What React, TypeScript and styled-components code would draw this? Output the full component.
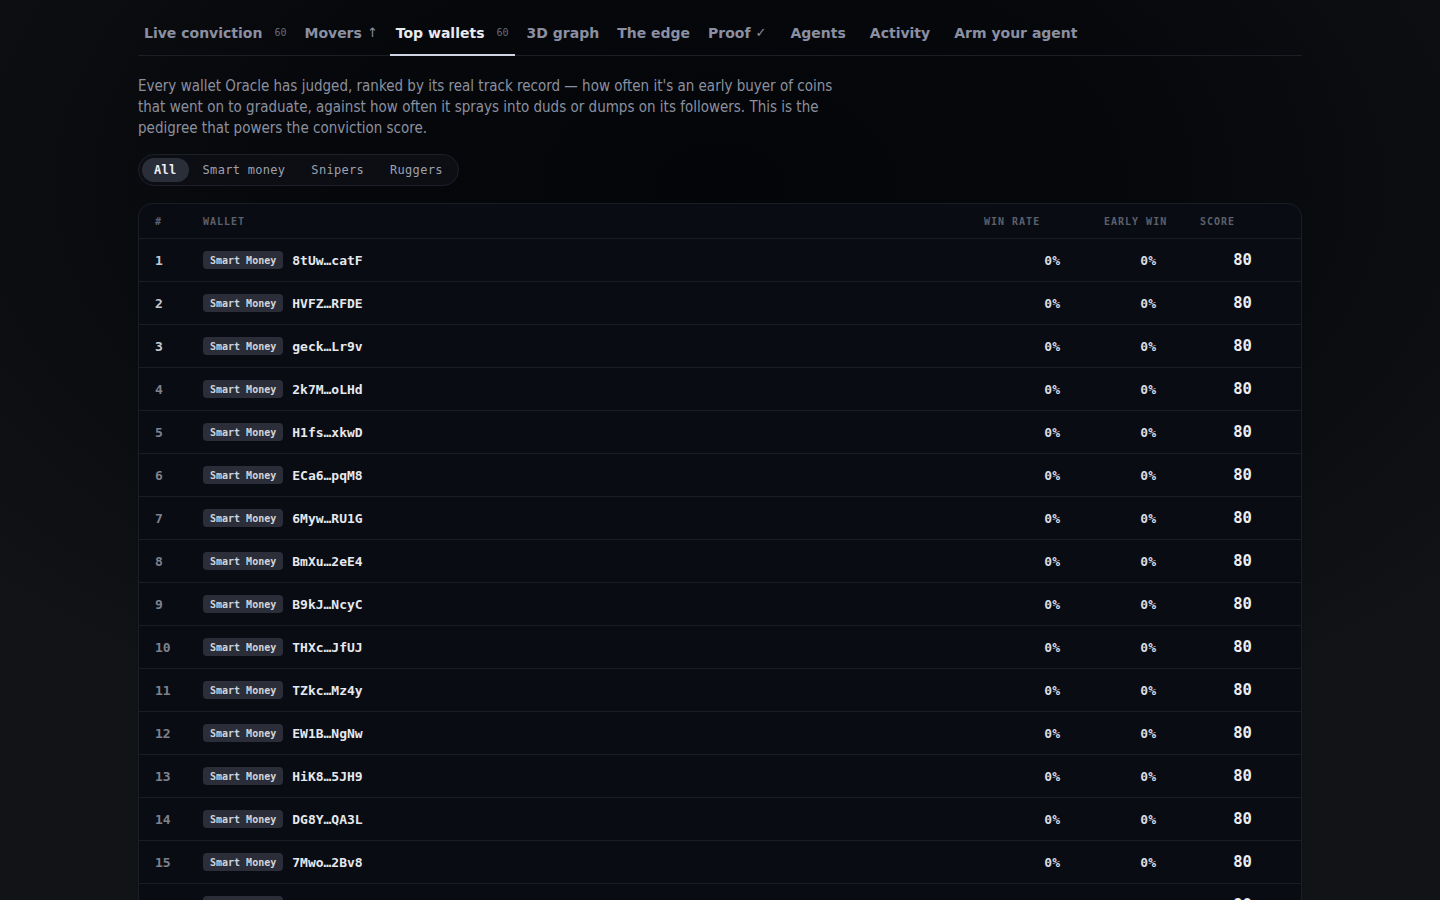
import React from "react";
import styled, { createGlobalStyle } from "styled-components";

const Global = createGlobalStyle`
  html, body { margin: 0; padding: 0; }
  body {
    background: radial-gradient(ellipse 70% 60% at 50% 18%, #040509 0%, #07080c 45%, #121317 100%);
    background-color: #07080c;
    min-height: 100vh;
    font-family: "DejaVu Sans", sans-serif;
    color: #e6e8ee;
  }
`;

const MONO = `"DejaVu Sans Mono", "Liberation Mono", monospace`;

const Page = styled.div`
  width: 1164px;
  margin: 0 auto;
  padding-top: 10px;
`;

const Nav = styled.nav`
  display: flex;
  gap: 6px;
  border-bottom: 1px solid #1c1e25;
`;

const Tab = styled.div<{ $active?: boolean; $trail?: boolean }>`
  display: flex;
  align-items: center;
  padding: 13px ${(p) => (p.$trail ? "12px" : "6px")} 11px 6px;
  line-height: 20px;
  font-size: 14px;
  font-weight: 700;
  color: ${(p) => (p.$active ? "#e9ebf1" : "#8a90a2")};
  border-bottom: 2px solid ${(p) => (p.$active ? "#cfd3e2" : "transparent")};
  margin-bottom: -1px;
  white-space: nowrap;
`;

const Count = styled.span`
  margin-left: 12px;
  font-family: ${MONO};
  font-size: 10px;
  font-weight: 400;
  color: #666a75;
`;

const Mark = styled.span`
  margin-left: 5px;
  font-weight: 400;
  font-size: 13px;
`;

const Desc = styled.p`
  margin: 20px 0 0;
  max-width: 720px;
  font-family: "DejaVu Sans Condensed", "DejaVu Sans", sans-serif;
  font-stretch: semi-condensed;
  font-size: 15px;
  line-height: 21px;
  color: #8b909f;
`;

const Filters = styled.div`
  display: inline-flex;
  margin-top: 15px;
  padding: 3px;
  gap: 2px;
  border: 1px solid #1d2029;
  border-radius: 16px;
  background: #0c0e14;
`;

const FilterBtn = styled.div<{ $active?: boolean }>`
  height: 24px;
  display: flex;
  align-items: center;
  padding: 0 12px;
  border-radius: 12px;
  font-family: ${MONO};
  font-size: 12px;
  letter-spacing: 0.3px;
  font-weight: ${(p) => (p.$active ? 700 : 400)};
  color: ${(p) => (p.$active ? "#eceef4" : "#9ca1b0")};
  background: ${(p) => (p.$active ? "#2a2e39" : "transparent")};
`;

const Table = styled.div`
  margin-top: 17px;
  border: 1px solid #1b1e27;
  border-radius: 14px;
  background: #0a0c13;
  overflow: hidden;
`;

const Row = styled.div<{ $head?: boolean }>`
  display: grid;
  grid-template-columns: 48px 1fr 120px 96px 85px;
  align-items: center;
  height: ${(p) => (p.$head ? "34px" : "42px")};
  padding: 0 16px;
  border-bottom: 1px solid #1a1d26;
`;

const Th = styled.div`
  font-family: ${MONO};
  font-size: 10px;
  font-weight: 700;
  letter-spacing: 1px;
  color: #5c606b;
`;

const Rank = styled.div<{ $top?: boolean }>`
  font-family: ${MONO};
  font-size: 13px;
  font-weight: 700;
  color: ${(p) => (p.$top ? "#c3c7d0" : "#7d818d")};
`;

const WalletCell = styled.div`
  display: flex;
  align-items: center;
  gap: 9px;
`;

const Badge = styled.span`
  height: 18px;
  display: inline-flex;
  align-items: center;
  padding: 0 7px;
  border-radius: 4px;
  background: #2b2e38;
  font-family: ${MONO};
  font-size: 10px;
  font-weight: 700;
  color: #d2d4db;
`;

const Addr = styled.span`
  font-family: ${MONO};
  font-size: 13px;
  font-weight: 700;
  color: #e6e8ee;
`;

const Pct = styled.div`
  text-align: right;
  padding-right: 44px;
  font-family: ${MONO};
  font-size: 13px;
  font-weight: 700;
  color: #d9dce4;
`;

const Score = styled.div`
  text-align: center;
  font-family: ${MONO};
  font-size: 15.5px;
  font-weight: 700;
  color: #eceef3;
`;

const wallets = [
  "8tUw…catF",
  "HVFZ…RFDE",
  "geck…Lr9v",
  "2k7M…oLHd",
  "H1fs…xkwD",
  "ECa6…pqM8",
  "6Myw…RU1G",
  "BmXu…2eE4",
  "B9kJ…NcyC",
  "THXc…JfUJ",
  "TZkc…Mz4y",
  "EW1B…NgNw",
  "HiK8…5JH9",
  "DG8Y…QA3L",
  "7Mwo…2Bv8",
  "Fq3p…Wd7K",
  "9xLm…Te2R",
  "Cv4N…hP8s",
];

export default function App() {
  return (
    <>
      <Global />
      <Page>
        <Nav>
          <Tab>
            Live conviction<Count>60</Count>
          </Tab>
          <Tab>
            Movers<Mark>↑</Mark>
          </Tab>
          <Tab $active>
            Top wallets<Count>60</Count>
          </Tab>
          <Tab>3D graph</Tab>
          <Tab>The edge</Tab>
          <Tab $trail>
            Proof<Mark>✓</Mark>
          </Tab>
          <Tab $trail>Agents</Tab>
          <Tab $trail>Activity</Tab>
          <Tab>Arm your agent</Tab>
        </Nav>

        <Desc>
          Every wallet Oracle has judged, ranked by its real track record — how often it's an
          early buyer of coins that went on to graduate, against how often it sprays into duds or
          dumps on its followers. This is the pedigree that powers the conviction score.
        </Desc>

        <Filters>
          <FilterBtn $active>All</FilterBtn>
          <FilterBtn>Smart money</FilterBtn>
          <FilterBtn>Snipers</FilterBtn>
          <FilterBtn>Ruggers</FilterBtn>
        </Filters>

        <Table>
          <Row $head>
            <Th>#</Th>
            <Th>WALLET</Th>
            <Th>WIN RATE</Th>
            <Th>EARLY WIN</Th>
            <Th>SCORE</Th>
          </Row>
          {wallets.map((w, i) => (
            <Row key={w}>
              <Rank $top={i < 3}>{i + 1}</Rank>
              <WalletCell>
                <Badge>Smart Money</Badge>
                <Addr>{w}</Addr>
              </WalletCell>
              <Pct>0%</Pct>
              <Pct>0%</Pct>
              <Score>80</Score>
            </Row>
          ))}
        </Table>
      </Page>
    </>
  );
}
